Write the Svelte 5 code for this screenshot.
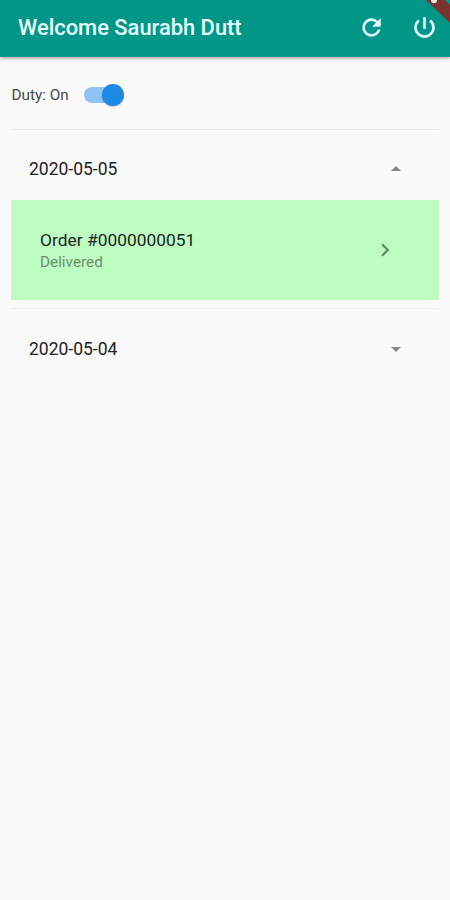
<script lang="ts">
	type Order = { number: string; status: string };
	type Group = { date: string; open: boolean; orders: Order[] };

	let duty = $state(true);

	let groups: Group[] = $state([
		{ date: '2020-05-05', open: true, orders: [{ number: '0000000051', status: 'Delivered' }] },
		{ date: '2020-05-04', open: false, orders: [] }
	]);
</script>

<div class="screen">
	<header class="app-bar">
		<h1>Welcome Saurabh Dutt</h1>
		<button class="icon-btn" aria-label="Refresh">
			<svg viewBox="0 0 24 24"><path d="M17.65 6.35A7.96 7.96 0 0 0 12 4a8 8 0 1 0 7.73 10h-2.08A6 6 0 1 1 12 6c1.66 0 3.14.69 4.22 1.78L13 11h7V4l-2.35 2.35z" /></svg>
		</button>
		<button class="icon-btn" aria-label="Log out">
			<svg viewBox="0 0 24 24"><path d="M13 3h-2v10h2V3zm4.83 2.17-1.42 1.42A6.92 6.92 0 0 1 19 12a7 7 0 1 1-11.42-5.42L6.17 5.17A8.93 8.93 0 0 0 3 12a9 9 0 1 0 14.83-6.83z" /></svg>
		</button>
		<svg class="ribbon" viewBox="0 0 28 28">
			<path d="M4 0H23L28 5V23z" />
			<circle cx="12" cy="0.3" r="3" />
		</svg>
	</header>

	<main>
		<div class="duty">
			<span>Duty: {duty ? 'On' : 'Off'}</span>
			<button class="switch" class:on={duty} role="switch" aria-checked={duty} aria-label="Duty" onclick={() => (duty = !duty)}>
				<span class="thumb"></span>
			</button>
		</div>

		{#each groups as group}
			<section class="group" class:open={group.open}>
				<button class="group-header" onclick={() => (group.open = !group.open)}>
					<span>{group.date}</span>
					<svg class="arrow" viewBox="0 0 10 5"><path d="M0 0h10L5 5z" /></svg>
				</button>
				{#if group.open}
					{#each group.orders as order}
						<div class="order">
							<div class="order-info">
								<div class="order-title">Order #{order.number}</div>
								<div class="order-status">{order.status}</div>
							</div>
							<svg class="chevron" viewBox="0 0 24 24"><path d="M10 6 8.59 7.41 13.17 12l-4.58 4.59L10 18l6-6z" /></svg>
						</div>
					{/each}
				{/if}
			</section>
		{/each}
	</main>
</div>

<style>
	:global(body) {
		background: #fafafa;
	}

	.screen {
		min-height: 900px;
		background: #fafafa;
		color: #212121;
		font-family: Roboto, sans-serif;
	}

	button {
		border: none;
		background: none;
		padding: 0;
		color: inherit;
		font: inherit;
		cursor: pointer;
	}

	svg {
		display: block;
	}

	.app-bar {
		position: relative;
		display: flex;
		align-items: center;
		box-sizing: border-box;
		height: 57px;
		padding: 0 12.5px 3px 18px;
		background: #009788;
		color: #e9fffc;
		box-shadow: 0 1px 4px rgba(0, 0, 0, 0.4);
	}

	h1 {
		flex: 1;
		margin: 0;
		padding-top: 1px;
		font-size: 21.9px;
		font-weight: 500;
		white-space: nowrap;
	}

	.icon-btn + .icon-btn {
		margin-left: 25.5px;
	}

	.icon-btn svg {
		width: 27px;
		height: 27px;
		fill: currentColor;
		stroke: currentColor;
		stroke-width: 0.35;
	}

	.ribbon {
		position: absolute;
		top: 0;
		right: 0;
		width: 28px;
		height: 28px;
	}

	.ribbon path {
		fill: #7c3431;
	}

	.ribbon circle {
		fill: #f4e9e9;
	}

	main {
		padding: 0 11px;
	}

	.duty {
		display: flex;
		align-items: center;
		gap: 15px;
		box-sizing: border-box;
		height: 72px;
		padding: 4px 0 0 0.5px;
		font-size: 15.3px;
		color: #484848;
	}

	.switch {
		display: flex;
		align-items: center;
		width: 37px;
		height: 16px;
		border-radius: 8px;
		background: #bdbdbd;
	}

	.switch.on {
		justify-content: flex-end;
		background: #8fc3f3;
	}

	.thumb {
		flex: none;
		width: 22px;
		height: 22px;
		margin: 0 -3px;
		border-radius: 50%;
		background: #fafafa;
		box-shadow: 0 1px 2px rgba(0, 0, 0, 0.2);
	}

	.on .thumb {
		background: #1e88e5;
	}

	.group {
		border-top: 1px solid #ebebeb;
	}

	.group.open {
		padding-bottom: 8px;
	}

	.group-header {
		display: flex;
		align-items: center;
		justify-content: space-between;
		width: 100%;
		height: 71px;
		padding: 9px 38.5px 0 18px;
		font-size: 17.5px;
	}

	.open .group-header {
		height: 70px;
		padding-top: 8px;
	}

	.arrow {
		width: 10px;
		height: 5px;
		fill: #858585;
	}

	.open .arrow {
		margin-top: -2px;
		transform: rotate(180deg);
	}

	.order {
		display: flex;
		align-items: center;
		justify-content: space-between;
		box-sizing: border-box;
		height: 100px;
		padding: 0 41px 0 29px;
		background: #bdfdc1;
	}

	.order-title {
		font-size: 17.4px;
		line-height: 24px;
	}

	.order-status {
		font-size: 15.3px;
		line-height: 21px;
		color: #6b8f6d;
	}

	.chevron {
		width: 26px;
		height: 26px;
		fill: #5d8a5f;
	}
</style>
